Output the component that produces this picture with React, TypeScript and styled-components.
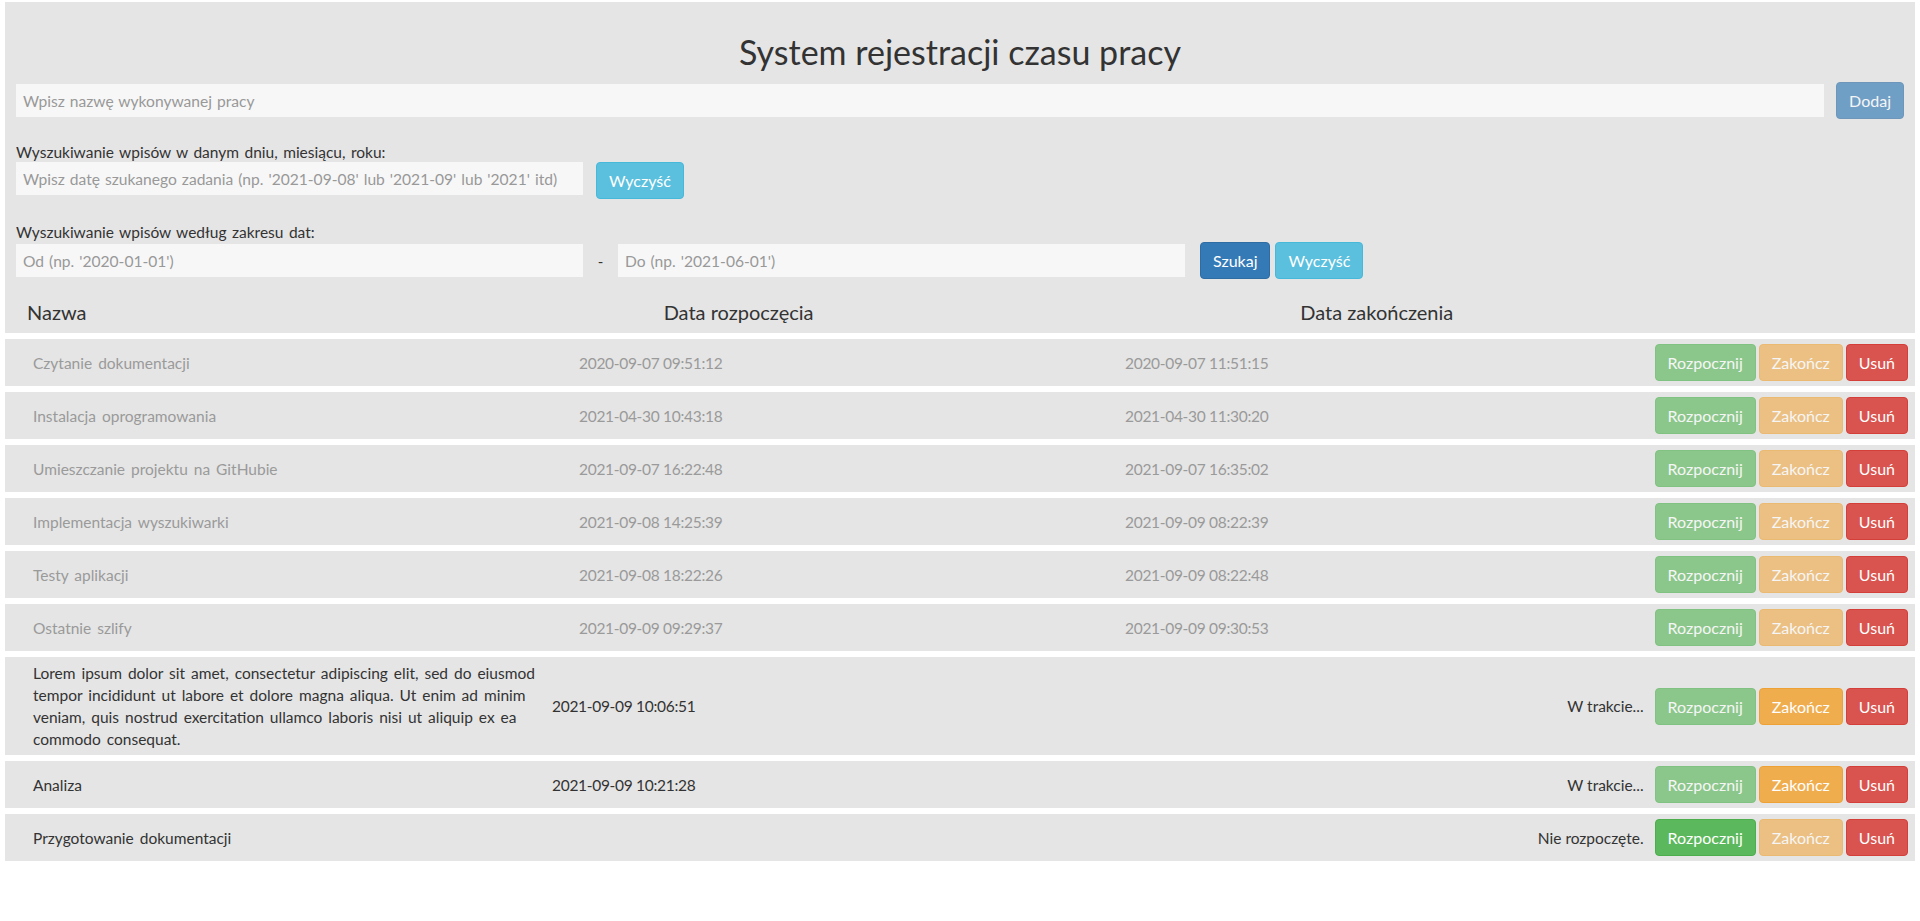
import React from "react";
import styled, { createGlobalStyle } from "styled-components";

const GlobalStyle = createGlobalStyle`
  html, body { margin: 0; padding: 0; background: #ffffff; }
  body { font-family: Lato, "Noto Sans", sans-serif; color: #333333; }
  * { box-sizing: border-box; }
`;

const palette = {
  primary: { bg: "#337ab7", border: "#2e6da4" },
  info: { bg: "#5bc0de", border: "#46b8da" },
  success: { bg: "#5cb85c", border: "#4cae4c" },
  warning: { bg: "#f0ad4e", border: "#eea236" },
  danger: { bg: "#d9534f", border: "#d43f3a" },
};
type Kind = keyof typeof palette;

const Page = styled.div`
  padding: 2px 5px 0;
`;

const Panel = styled.div`
  background: #e5e5e5;
  padding: 30px 11px 8px;
`;

const Title = styled.h1`
  margin: 0 0 10px;
  font-size: 34px;
  font-weight: 400;
  line-height: 40px;
  text-align: center;
  color: #333333;
`;

const AddRow = styled.div`
  display: flex;
  align-items: center;
  gap: 12px;
`;

const Input = styled.input<{ $w?: string }>`
  flex: ${(p) => (p.$w ? `0 0 ${p.$w}` : "1 1 auto")};
  min-width: 0;
  height: 33px;
  border: none;
  background: #f7f7f7;
  padding: 0 7px;
  font-family: inherit;
  font-size: 15.6px;
  word-spacing: 1px;
  color: #555555;
  outline: none;
  &::placeholder {
    color: #999999;
  }
`;

const Button = styled.button<{ $kind: Kind; $gap?: number }>`
  flex: none;
  height: 37px;
  margin-left: ${(p) => p.$gap ?? 0}px;
  padding: 0 12px;
  border-radius: 4px;
  border: 1px solid ${(p) => palette[p.$kind].border};
  background: ${(p) => palette[p.$kind].bg};
  color: #ffffff;
  font-family: inherit;
  font-size: 16px;
  line-height: 21px;
  cursor: pointer;
  &:disabled {
    opacity: 0.65;
    cursor: not-allowed;
  }
`;

const Label = styled.div<{ $top: number }>`
  margin-top: ${(p) => p.$top}px;
  font-size: 15.5px;
  word-spacing: 1.5px;
  line-height: 20px;
  color: #333333;
`;

const SearchRow = styled.div`
  display: flex;
  align-items: flex-start;
  gap: 13px;
`;

const RangeRow = styled.div`
  display: flex;
  align-items: center;
`;

const Dash = styled.span`
  flex: 0 0 35px;
  text-align: center;
  font-size: 15px;
  color: #333333;
`;

const Header = styled.div`
  margin: 20px -11px 0;
  display: grid;
  grid-template-columns: 1fr 1fr 1fr;
`;

const HeaderCell = styled.div`
  padding-left: 22px;
  font-size: 20px;
  line-height: 26px;
  color: #333333;
`;

const List = styled.div`
  display: flex;
  flex-direction: column;
`;

const Row = styled.div<{ $muted: boolean }>`
  margin-top: 6px;
  display: flex;
  align-items: center;
  min-height: 47px;
  padding: 5px 7px 5px 28px;
  background: #e5e5e5;
  font-size: 15.5px;
  word-spacing: 2px;
  line-height: 22px;
  color: ${(p) => (p.$muted ? "#9a9a9a" : "#333333")};
`;

const Cell = styled.div<{ $w?: string }>`
  flex: ${(p) => (p.$w ? `0 0 ${p.$w}` : "1 1 0")};
  min-width: 0;
  padding-right: 10px;
`;

const DateCell = styled(Cell)`
  letter-spacing: -0.3px;
  word-spacing: 0;
`;

const Status = styled.span`
  flex: none;
  margin-right: 11px;
  word-spacing: 0;
  color: #333333;
`;

const Actions = styled.div`
  flex: none;
  display: flex;
  gap: 3px;
  word-spacing: 0;
`;

type State = "done" | "active" | "pending";
type Entry = { name: string; start?: string; end?: string; state: State };

const entries: Entry[] = [
  { name: "Czytanie dokumentacji", start: "2020-09-07 09:51:12", end: "2020-09-07 11:51:15", state: "done" },
  { name: "Instalacja oprogramowania", start: "2021-04-30 10:43:18", end: "2021-04-30 11:30:20", state: "done" },
  { name: "Umieszczanie projektu na GitHubie", start: "2021-09-07 16:22:48", end: "2021-09-07 16:35:02", state: "done" },
  { name: "Implementacja wyszukiwarki", start: "2021-09-08 14:25:39", end: "2021-09-09 08:22:39", state: "done" },
  { name: "Testy aplikacji", start: "2021-09-08 18:22:26", end: "2021-09-09 08:22:48", state: "done" },
  { name: "Ostatnie szlify", start: "2021-09-09 09:29:37", end: "2021-09-09 09:30:53", state: "done" },
  {
    name:
      "Lorem ipsum dolor sit amet, consectetur adipiscing elit, sed do eiusmod tempor incididunt ut labore et dolore magna aliqua. Ut enim ad minim veniam, quis nostrud exercitation ullamco laboris nisi ut aliquip ex ea commodo consequat.",
    start: "2021-09-09 10:06:51",
    state: "active",
  },
  { name: "Analiza", start: "2021-09-09 10:21:28", state: "active" },
  { name: "Przygotowanie dokumentacji", state: "pending" },
];

function EntryRow({ e }: { e: Entry }) {
  const actions = (
    <Actions>
      <Button $kind="success" disabled={e.state !== "pending"}>Rozpocznij</Button>
      <Button $kind="warning" disabled={e.state !== "active"}>Zakończ</Button>
      <Button $kind="danger">Usuń</Button>
    </Actions>
  );
  if (e.state === "done") {
    return (
      <Row $muted>
        <Cell $w="29.12%">{e.name}</Cell>
        <DateCell $w="29.12%">{e.start}</DateCell>
        <DateCell>{e.end}</DateCell>
        {actions}
      </Row>
    );
  }
  if (e.state === "active") {
    return (
      <Row $muted={false}>
        <Cell $w="27.68%">{e.name}</Cell>
        <DateCell>{e.start}</DateCell>
        <Status>W trakcie...</Status>
        {actions}
      </Row>
    );
  }
  return (
    <Row $muted={false}>
      <Cell>{e.name}</Cell>
      <Status>Nie rozpoczęte.</Status>
      {actions}
    </Row>
  );
}

export default function App() {
  return (
    <>
      <GlobalStyle />
      <Page>
        <Panel>
          <Title>System rejestracji czasu pracy</Title>
          <AddRow>
            <Input placeholder="Wpisz nazwę wykonywanej pracy" />
            <Button $kind="primary" disabled>Dodaj</Button>
          </AddRow>
          <Label $top={23}>Wyszukiwanie wpisów w danym dniu, miesiącu, roku:</Label>
          <SearchRow>
            <Input $w="567px" placeholder="Wpisz datę szukanego zadania (np. '2021-09-08' lub '2021-09' lub '2021' itd)" />
            <Button $kind="info">Wyczyść</Button>
          </SearchRow>
          <Label $top={23}>Wyszukiwanie wpisów według zakresu dat:</Label>
          <RangeRow>
            <Input $w="567px" placeholder="Od (np. '2020-01-01')" />
            <Dash>-</Dash>
            <Input $w="567px" placeholder="Do (np. '2021-06-01')" />
            <Button $kind="primary" $gap={15}>Szukaj</Button>
            <Button $kind="info" $gap={5}>Wyczyść</Button>
          </RangeRow>
          <Header>
            <HeaderCell>Nazwa</HeaderCell>
            <HeaderCell>Data rozpoczęcia</HeaderCell>
            <HeaderCell>Data zakończenia</HeaderCell>
          </Header>
        </Panel>
        <List>
          {entries.map((e) => (
            <EntryRow key={e.name} e={e} />
          ))}
        </List>
      </Page>
    </>
  );
}
